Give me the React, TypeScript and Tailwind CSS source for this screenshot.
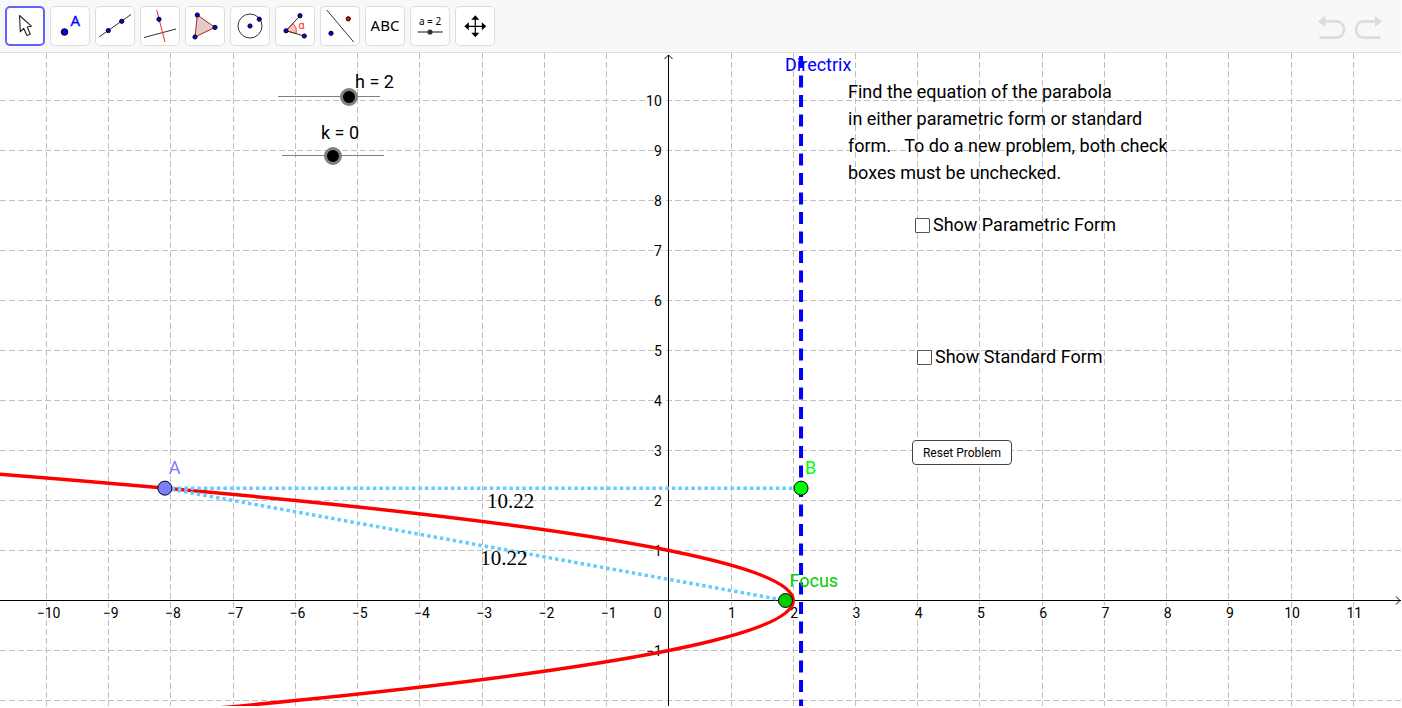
import { useState } from 'react'
import type { ReactNode } from 'react'

// Screen position of the origin inside the drawing area, and pixels per unit
const ORIGIN_X = 668.8
const ORIGIN_Y = 547.5
const UNIT_X = 62.23
const UNIT_Y = 50
// Distance from the vertex to the focus
const FOCAL = 0.125

const X_TICKS = Array.from({ length: 22 }, (_, i) => i - 10)
const Y_TICKS = Array.from({ length: 13 }, (_, i) => i - 2)

const px = (x: number) => ORIGIN_X + x * UNIT_X
const py = (y: number) => ORIGIN_Y - y * UNIT_Y
const snap = (v: number) => Math.floor(v) + 0.5

function formatTick(n: number) {
    return n < 0 ? `−${-n}` : `${n}`
}

function Dot({ x, y, color = '#0000ff', r = 2.1 }: { x: number; y: number; color?: string; r?: number }) {
    return <circle cx={x} cy={y} r={r} fill={color} stroke="#000" strokeWidth="1" />
}

interface Tool {
    name: string
    icon: ReactNode
}

const TOOLS: Tool[] = [
    {
        name: 'Move',
        icon: (
            <path
                d="M14.5 9.5 L15.3 25.8 L18.6 22.3 L22 29.4 L25.3 28.3 L22.3 21 L26.4 20.2 Z"
                fill="#fff"
                stroke="#222"
                strokeWidth="1.1"
                strokeLinejoin="round"
            />
        ),
    },
    {
        name: 'Point',
        icon: (
            <>
                <Dot x={14.5} y={26} r={3.3} />
                <text x="20.5" y="20" fontSize="15" fill="#0000ff" stroke="#0000ff" strokeWidth="0.3">A</text>
            </>
        ),
    },
    {
        name: 'Line',
        icon: (
            <>
                <line x1="4" y1="31" x2="36" y2="8.5" stroke="#333" />
                <Dot x={13.3} y={24.6} />
                <Dot x={26.7} y={15.3} />
            </>
        ),
    },
    {
        name: 'Perpendicular Line',
        icon: (
            <>
                <line x1="4" y1="31.5" x2="36" y2="23" stroke="#333" />
                <line x1="16.7" y1="4" x2="25" y2="36" stroke="#ff2020" />
                <Dot x={19} y={13.3} />
            </>
        ),
    },
    {
        name: 'Polygon',
        icon: (
            <>
                <path d="M12.3 9 L30 21.4 L10 31 Z" fill="#e8c8c8" stroke="#a03028" />
                <Dot x={12.3} y={9} />
                <Dot x={30} y={21.4} />
                <Dot x={10} y={31} />
            </>
        ),
    },
    {
        name: 'Circle with Center',
        icon: (
            <>
                <circle cx="20" cy="20" r="12" fill="none" stroke="#333" />
                <Dot x={20} y={20} />
                <Dot x={29.3} y={13.2} />
            </>
        ),
    },
    {
        name: 'Angle',
        icon: (
            <>
                <path d="M11 24.8 L18 17.4 A10.5 10.5 0 0 1 21.2 27.5 Z" fill="#ffc0c0" stroke="#ff4040" />
                <path d="M25 9.7 L11 24.8 L29.3 30" fill="none" stroke="#333" />
                <text x="23.5" y="23" fontSize="10" fill="#ff2020">α</text>
                <Dot x={11} y={24.8} />
                <Dot x={25} y={9.7} />
                <Dot x={29.3} y={30} />
            </>
        ),
    },
    {
        name: 'Reflect about Line',
        icon: (
            <>
                <line x1="6.7" y1="4" x2="33.7" y2="36" stroke="#333" />
                <Dot x={28.3} y={12.8} color="#ff0000" />
                <Dot x={11} y={27.3} />
            </>
        ),
    },
    {
        name: 'Text',
        icon: <text x="20" y="25.4" fontSize="15" textAnchor="middle" fill="#000">ABC</text>,
    },
    {
        name: 'Slider',
        icon: (
            <>
                <text x="20" y="19" fontSize="10" textAnchor="middle" fill="#000">a = 2</text>
                <line x1="7.7" y1="26" x2="32.7" y2="26" stroke="#555" strokeWidth="1.4" />
                <circle cx="20" cy="26" r="2.6" fill="#333" />
            </>
        ),
    },
    {
        name: 'Move Graphics View',
        icon: (
            <>
                <path d="M20.3 12 V28.6 M12 20.3 H28.6" stroke="#000" strokeWidth="1.2" />
                <path
                    d="M20.3 9.3 L24.3 13.8 H16.3 Z M20.3 31.3 L24.3 26.8 H16.3 Z M9.3 20.3 L13.8 16.3 V24.3 Z M31.3 20.3 L26.8 16.3 V24.3 Z"
                    fill="#000"
                />
            </>
        ),
    },
]

function Toolbar() {
    const [active, setActive] = useState('Move')

    return (
        <header className="flex items-center justify-between border-b border-[#dcdcdc] bg-[#f8f8f8] py-[6px] pl-[5px] pr-[19px]">
            <div className="flex gap-[5px]">
                {TOOLS.map((tool) => (
                    <button
                        key={tool.name}
                        type="button"
                        aria-label={tool.name}
                        onClick={() => setActive(tool.name)}
                        className={`relative size-10 rounded-[5px] bg-white ${
                            active === tool.name
                                ? 'ring-2 ring-inset ring-[#6161ff]'
                                : 'ring-1 ring-inset ring-[#dcdcdc]'
                        }`}
                    >
                        <svg viewBox="0 0 40 40" className="size-10 font-['Noto_Sans',sans-serif]">
                            {tool.icon}
                        </svg>
                    </button>
                ))}
            </div>
            <div className="flex gap-2">
                <button type="button" aria-label="Undo">
                    <svg viewBox="0 0 28 26" className="h-[26px] w-7">
                        <path d="M6 8.4 H19 A7 8.1 0 0 1 19 24.6 H1.5" fill="none" stroke="#dcdcdc" strokeWidth="2.6" />
                        <path d="M0 8.4 L7.2 2.8 V14 Z" fill="#dcdcdc" />
                    </svg>
                </button>
                <button type="button" aria-label="Redo">
                    <svg viewBox="0 0 28 26" className="h-[26px] w-7">
                        <path d="M22 8.4 H9 A7 8.1 0 0 0 9 24.6 H26.5" fill="none" stroke="#dcdcdc" strokeWidth="2.6" />
                        <path d="M28 8.4 L20.8 2.8 V14 Z" fill="#dcdcdc" />
                    </svg>
                </button>
            </div>
        </header>
    )
}

function Graph({ h, k }: { h: number; k: number }) {
    const focus = { x: px(h - FOCAL), y: py(k) }
    const directrix = px(h + FOCAL)
    const reach = 2.247
    const a = { x: px(h - 2 * reach * reach), y: py(k + reach) }

    // x = h - 2(y - k)^2 is a single quadratic Bezier between y = k ± 4
    const span = 4
    const endX = px(h - 2 * span * span)
    const ctrlX = px(h + 2 * span * span)
    const curve = `M${endX} ${py(k + span)} Q${ctrlX} ${py(k)} ${endX} ${py(k - span)}`

    return (
        <svg className="absolute inset-0 h-full w-full font-[Roboto,sans-serif]" aria-hidden="true">
            {/* Grid */}
            <g stroke="#c0c0c0" strokeWidth="1" strokeDasharray="6 3">
                {X_TICKS.filter((n) => n !== 0).map((n) => (
                    <line key={n} x1={snap(px(n))} y1="0" x2={snap(px(n))} y2="100%" />
                ))}
                {Y_TICKS.filter((n) => n !== 0).map((n) => (
                    <line key={n} x1="0" y1={snap(py(n))} x2="100%" y2={snap(py(n))} />
                ))}
            </g>

            {/* Axes */}
            <g stroke="#000" strokeWidth="1" fill="none">
                <line x1={snap(ORIGIN_X)} y1="2" x2={snap(ORIGIN_X)} y2="100%" />
                <path d={`M${snap(ORIGIN_X) - 4} 6 l4 -4 l4 4`} />
                <line x1="0" y1={ORIGIN_Y} x2="100%" y2={ORIGIN_Y} />
                <svg x="100%" y={ORIGIN_Y} overflow="visible">
                    <path d="M-5 -4 L-1 0 L-5 4" />
                </svg>
            </g>
            <g fontSize="14" fill="#000" stroke="#fff" strokeWidth="3" paintOrder="stroke">
                {X_TICKS.map((n) => (
                    <text
                        key={n}
                        x={n === 0 ? ORIGIN_X - 11 : px(n) + (n < 0 ? 2 : 1)}
                        y={ORIGIN_Y + 17}
                        textAnchor="middle"
                    >
                        {formatTick(n)}
                    </text>
                ))}
                {Y_TICKS.filter((n) => n !== 0 && n > -2).map((n) => (
                    <text key={n} x={ORIGIN_X - 7} y={py(n) + 5} textAnchor="end">
                        {formatTick(n)}
                    </text>
                ))}
            </g>

            {/* Curve, directrix and the two equal distances */}
            <line
                x1={directrix}
                y1="3"
                x2={directrix}
                y2="100%"
                stroke="#0000ff"
                strokeWidth="4"
                strokeDasharray="12 7.5"
            />
            <path d={curve} fill="none" stroke="#ff0000" strokeWidth="3.5" />
            <g stroke="#66ccff" strokeWidth="3.5" strokeDasharray="3.5 3">
                <line x1={a.x} y1={a.y} x2={directrix} y2={a.y} />
                <line x1={a.x} y1={a.y} x2={focus.x} y2={focus.y} />
            </g>
            <g stroke="#000" strokeWidth="1">
                <circle cx={a.x} cy={a.y} r="7" fill="#7d7dff" />
                <circle cx={directrix} cy={a.y} r="7" fill="#00ff00" />
                <circle cx={focus.x} cy={focus.y} r="7" fill="#00cc00" />
            </g>

            {/* Labels */}
            <g fontSize="18">
                <text x={a.x + 4} y={a.y - 14} fill="#7d7dff">A</text>
                <text x={directrix + 4} y={a.y - 14} fill="#00ff00">B</text>
                <text x={focus.x + 4} y={focus.y - 14} fill="#00cc00">Focus</text>
                <text x={directrix - 16} y="18" fill="#0000ff">Directrix</text>
            </g>
            <g fontSize="21" className="font-['Liberation_Serif',serif]">
                <text x={(a.x + directrix) / 2 + 4} y={a.y + 20}>10.22</text>
                <text x={(a.x + focus.x) / 2 + 5} y={(a.y + focus.y) / 2 + 21}>10.22</text>
            </g>
        </svg>
    )
}

interface SliderProps {
    id: string
    value: number
    onChange: (value: number) => void
    className: string
    labelClass: string
}

function Slider({ id, value, onChange, className, labelClass }: SliderProps) {
    return (
        <div className={`absolute w-[120px] ${className}`}>
            <label htmlFor={id} className={`block whitespace-nowrap text-[18px] leading-4 ${labelClass}`}>
                {id} = {value}
            </label>
            <div className="relative flex h-[14px] items-center">
                <div className="absolute inset-x-[9px] top-[6px] h-px bg-[#808080]" />
                <input
                    id={id}
                    type="range"
                    min={-5}
                    max={5}
                    value={value}
                    onChange={(e) => onChange(Number(e.target.value))}
                    className="relative w-full appearance-none bg-transparent [&::-webkit-slider-thumb]:size-[18px] [&::-webkit-slider-thumb]:appearance-none [&::-webkit-slider-thumb]:rounded-full [&::-webkit-slider-thumb]:border-3 [&::-webkit-slider-thumb]:border-[#808080] [&::-webkit-slider-thumb]:bg-black"
                />
            </div>
        </div>
    )
}

interface CheckProps {
    label: string
    checked: boolean
    onChange: (checked: boolean) => void
    className: string
}

function Check({ label, checked, onChange, className }: CheckProps) {
    return (
        <label className={`absolute flex items-center gap-[3px] whitespace-nowrap text-[18px] leading-6 ${className}`}>
            <input
                type="checkbox"
                checked={checked}
                onChange={(e) => onChange(e.target.checked)}
                className="size-[15px] appearance-none rounded-[1px] border border-[#555] bg-white checked:bg-black"
            />
            {label}
        </label>
    )
}

export default function App() {
    const [h, setH] = useState(2)
    const [k, setK] = useState(0)
    const [parametric, setParametric] = useState(false)
    const [standard, setStandard] = useState(false)

    function reset() {
        if (parametric || standard) return
        setH(2)
        setK(0)
    }

    return (
        <div className="flex h-screen flex-col bg-white pb-[2px] pr-px font-[Roboto,sans-serif] text-black">
            <Toolbar />
            <main className="relative flex-1 overflow-hidden">
                <Graph h={h} k={k} />

                <Slider id="h" value={h} onChange={setH} className="left-[269px] top-[21px]" labelClass="pl-[86px]" />
                <Slider id="k" value={k} onChange={setK} className="left-[273px] top-[72px]" labelClass="pl-12 pb-2" />

                <p className="absolute left-[848px] top-[25px] whitespace-pre text-[18px] leading-[27px]">
                    {'Find the equation of the parabola\nin either parametric form or standard\nform.   To do a new problem, both check\nboxes must be unchecked.'}
                </p>

                <Check
                    label="Show Parametric Form"
                    checked={parametric}
                    onChange={setParametric}
                    className="left-[915px] top-[160px]"
                />
                <Check
                    label="Show Standard Form"
                    checked={standard}
                    onChange={setStandard}
                    className="left-[917px] top-[292px]"
                />

                <button
                    type="button"
                    onClick={reset}
                    className="absolute left-[912px] top-[387px] h-[25px] w-[100px] rounded-[4px] border border-[#444] bg-white text-[12px] leading-4"
                >
                    Reset Problem
                </button>
            </main>
        </div>
    )
}
